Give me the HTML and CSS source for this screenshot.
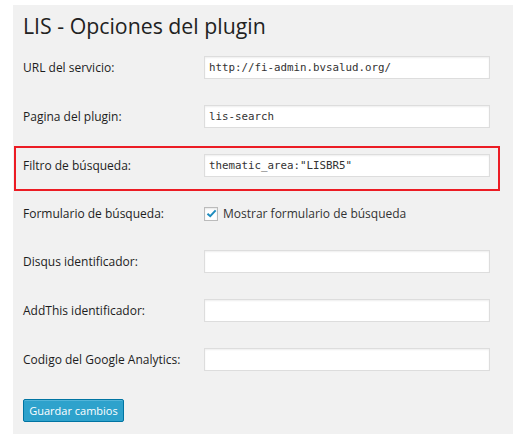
FILE: index.html
```html
<!DOCTYPE html>
<html lang="es">
<head>
  <meta charset="UTF-8">
  <title>LIS - Opciones del plugin</title>
  <link rel="stylesheet" href="styles.css">
</head>
<body>
  <div class="wrap">
    <h2>LIS - Opciones del plugin</h2>

    <form class="settings">
      <div class="row">
        <label class="label">URL del servicio:</label>
        <input class="field" type="text" value="http://fi-admin.bvsalud.org/">
      </div>
      <div class="row">
        <label class="label">Pagina del plugin:</label>
        <input class="field" type="text" value="lis-search">
      </div>
      <div class="row highlight">
        <label class="label">Filtro de búsqueda:</label>
        <input class="field" type="text" value='thematic_area:"LISBR5"'>
      </div>
      <div class="row row-check">
        <label class="label">Formulario de búsqueda:</label>
        <label class="check">
          <span class="box">
            <svg width="11" height="9" viewBox="0 0 12 10"><path d="M1.5 5.2 L4.6 8 L10.6 1.6" fill="none" stroke="#1e8cbe" stroke-width="2.2"/></svg>
          </span>
          Mostrar formulario de búsqueda
        </label>
      </div>
      <div class="row">
        <label class="label">Disqus identificador:</label>
        <input class="field" type="text" value="">
      </div>
      <div class="row">
        <label class="label">AddThis identificador:</label>
        <input class="field" type="text" value="">
      </div>
      <div class="row">
        <label class="label">Codigo del Google Analytics:</label>
        <input class="field" type="text" value="">
      </div>

      <button type="button" class="button-primary">Guardar cambios</button>
    </form>
  </div>
</body>
</html>
```

FILE: styles.css
```css
body {
  margin: 0;
  background-color: #fff;
  font-family: "Open Sans", sans-serif;
  color: #222;
}

.wrap {
  margin: 5px 19px 0 13px;
  height: 429px;
  background-color: #f1f1f1;
  padding-top: 1px;
  box-sizing: border-box;
}

h2 {
  margin: 5px 0 0 10px;
  font-size: 21.3px;
  font-weight: 400;
  line-height: 30px;
  color: #222;
}

.settings {
  margin-top: 2px;
}

.row {
  position: relative;
  display: flex;
  align-items: center;
  height: 49px;
  margin-left: 1px;
  width: 486px;
  padding-left: 9px;
  box-sizing: border-box;
}

.row-check {
  height: 47px;
}

.highlight::after {
  content: "";
  position: absolute;
  left: 0;
  right: 0;
  top: 5px;
  bottom: -1px;
  border: 2px solid #ec1c24;
}

.label {
  width: 181px;
  flex: none;
  font-size: 12px;
  color: #1d1d1d;
}

.field {
  width: 286px;
  height: 23px;
  box-sizing: border-box;
  margin: 0;
  padding: 0 4px;
  border: 1px solid #ddd;
  box-shadow: inset 0 1px 2px rgba(0, 0, 0, 0.07);
  background-color: #fff;
  font-family: "DejaVu Sans Mono", monospace;
  font-size: 10.8px;
  color: #333;
}

.check {
  display: flex;
  align-items: center;
  font-size: 12px;
  color: #333;
}

.box {
  display: flex;
  align-items: center;
  justify-content: center;
  width: 12px;
  height: 12px;
  margin-right: 5px;
  border: 1px solid #bbb;
  background-color: #fff;
  box-shadow: inset 0 1px 2px rgba(0, 0, 0, 0.1);
}

.button-primary {
  margin: 15px 0 0 10px;
  width: 101px;
  height: 23px;
  padding: 0;
  border: 1px solid #0074a2;
  border-radius: 2px;
  background-color: #2ea2cc;
  box-shadow: inset 0 1px 0 rgba(120, 200, 230, 0.5);
  color: #fff;
  font-family: "Open Sans", sans-serif;
  font-size: 11px;
}
```
